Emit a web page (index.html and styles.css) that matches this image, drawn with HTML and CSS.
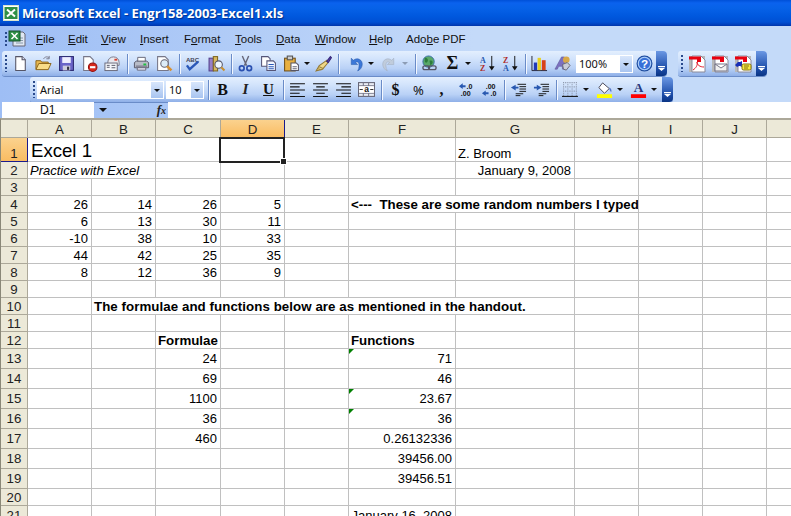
FILE: index.html
```html
<!DOCTYPE html>
<html lang="en">
<head>
    <meta charset="UTF-8">
    <title>Microsoft Excel - Engr158-2003-Excel1.xls</title>
    <link rel="stylesheet" href="styles.css">
</head>
<body>
<div class="window">

    <div class="titlebar">
        <svg class="app-icon" viewBox="0 0 16 16"><rect x="0.5" y="0.5" width="15" height="15" fill="#fff" stroke="#d8e4d0"/><rect x="1.5" y="2" width="13" height="12" fill="#2f8f46"/><path d="M4 4.5l8 7M12 4.5l-8 7" stroke="#fff" stroke-width="2"/></svg>
        <span class="title-text">Microsoft Excel - Engr158-2003-Excel1.xls</span>
    </div>

    <div class="bars">
        <div class="menubar">
            <span class="grip"></span>
            <svg class="doc-icon" viewBox="0 0 18 18"><path d="M5 2h10l2 2v12H5z" fill="#dfe7f2" stroke="#667"/><path d="M8 8h7M8 10.500h7M8 13h7" stroke="#89a"/><rect x="1" y="1" width="11" height="10" fill="#2f8f46" stroke="#15502a"/><path d="M3.500 3l6 6M9.500 3l-6 6" stroke="#fff" stroke-width="1.500"/></svg>
            <a class="menu m-file"><u>F</u>ile</a>
            <a class="menu m-edit"><u>E</u>dit</a>
            <a class="menu m-view"><u>V</u>iew</a>
            <a class="menu m-insert"><u>I</u>nsert</a>
            <a class="menu m-format">F<u>o</u>rmat</a>
            <a class="menu m-tools"><u>T</u>ools</a>
            <a class="menu m-data"><u>D</u>ata</a>
            <a class="menu m-window"><u>W</u>indow</a>
            <a class="menu m-help"><u>H</u>elp</a>
            <a class="menu">Ado<u>b</u>e PDF</a>
        </div>

        <div class="bar-row">
            <div class="toolbar tb-standard">
                <span class="grip"></span>
                <button class="btn"><svg viewBox="0 0 16 16"><path d="M3.500 1.500h6l3 3v10h-9z" fill="#fff" stroke="#556"/><path d="M9.500 1.500v3h3" fill="#dde" stroke="#556"/></svg></button>
                <button class="btn"><svg viewBox="0 0 18 16"><path d="M1 5h5l1 1.500h7V14H1z" fill="#e8b850" stroke="#8a6418"/><path d="M4 8h13l-3 6.500H1z" fill="#f8dc88" stroke="#8a6418"/><path d="M9 3c2-2.500 4-2.500 6-1M15 0v3h-3" fill="none" stroke="#778"/></svg></button>
                <button class="btn"><svg viewBox="0 0 16 16"><rect x="1.500" y="1.500" width="13" height="13" fill="#6a64c8" stroke="#2a2870"/><rect x="4" y="2" width="8" height="5.500" fill="#eef"/><rect x="4.500" y="10" width="7" height="4.500" fill="#ccd"/><rect x="8.500" y="11" width="2" height="3" fill="#334"/></svg></button>
                <button class="btn"><svg viewBox="0 0 16 16"><path d="M2.500 1.500h6l3 3v10h-9z" fill="#fff" stroke="#778"/><circle cx="11" cy="11.500" r="4" fill="#d8281c" stroke="#901010"/><rect x="8.500" y="10.500" width="5" height="2" fill="#fff"/></svg></button>
                <button class="btn"><svg viewBox="0 0 18 16"><path d="M4 7c0-4 3-6 6-6s6 2 6 6v3H4z" fill="#e8e8ee" stroke="#778"/><rect x="11" y="3" width="3" height="2" fill="#d84030"/><rect x="1" y="7.500" width="13" height="8" fill="#f4f6fa" stroke="#667"/><path d="M3 10h3M3 12h3M8 10h4M8 12.500h4" stroke="#556"/></svg></button>
                <span class="sep"></span>
                <button class="btn"><svg viewBox="0 0 18 16"><path d="M5 1.500h8v5H5z" fill="#fff" stroke="#667"/><path d="M1.500 7l2-1.500h11l2 1.500v5.500h-15z" fill="#b8bcc8" stroke="#556"/><rect x="3" y="10" width="12" height="2" fill="#889"/><rect x="11" y="8" width="3" height="2" fill="#20c040"/><path d="M4.500 12.500h9v2.500h-9z" fill="#eef" stroke="#667"/></svg></button>
                <button class="btn"><svg viewBox="0 0 16 16"><path d="M1.500 1.500h7l3 3v10h-10z" fill="#fff" stroke="#778"/><circle cx="8" cy="8" r="3.500" fill="#dcecf8" stroke="#667"/><path d="M10.500 10.500l4 4" stroke="#d89030" stroke-width="2.500"/></svg></button>
                <span class="sep"></span>
                <button class="btn"><svg viewBox="0 0 18 16"><text x="1" y="6.500" class="svg-abc">ABC</text><path d="M2 10l3 4 9-8" fill="none" stroke="#2a58b8" stroke-width="2.500"/></svg></button>
                <button class="btn"><svg viewBox="0 0 16 16"><rect x="1" y="3" width="4" height="12" fill="#9880c8" stroke="#54408c"/><rect x="5" y="1.500" width="4" height="13.500" fill="#d8b860" stroke="#806820"/><circle cx="10" cy="9" r="3.500" fill="#eef6ff" stroke="#556"/><path d="M12.500 11.500l3 3" stroke="#c89030" stroke-width="2"/></svg></button>
                <span class="sep"></span>
                <button class="btn"><svg viewBox="0 0 16 16"><path d="M5 1l4 9M11 1L7 10" stroke="#667" stroke-width="1.300"/><circle cx="4.500" cy="12.500" r="2.200" fill="none" stroke="#2a50b0" stroke-width="1.600"/><circle cx="11.500" cy="12.500" r="2.200" fill="none" stroke="#2a50b0" stroke-width="1.600"/></svg></button>
                <button class="btn"><svg viewBox="0 0 16 16"><path d="M1.500 1.500h6l2 2v7h-8z" fill="#fff" stroke="#557"/><path d="M6.500 5.500h6l2 2v7h-8z" fill="#f4f8ff" stroke="#557"/><path d="M8 9h5M8 11h5M8 13h5" stroke="#2a58b8"/></svg></button>
                <button class="btn"><svg viewBox="0 0 16 16"><rect x="1.500" y="3" width="10" height="12" fill="#e8b040" stroke="#70501a"/><rect x="4" y="1" width="5" height="3.500" fill="#ccc" stroke="#555"/><path d="M7.500 7.500h5l2 2v5h-7z" fill="#fff" stroke="#556"/><path d="M9 11h4M9 13h4" stroke="#667"/></svg></button>
                <button class="drop"></button>
                <button class="btn"><svg viewBox="0 0 16 16"><path d="M11 5l-7 5-3 5 6-1.500 5-6z" fill="#f0d888" stroke="#927834"/><path d="M4 11l4 2M3 13l3 1" stroke="#a08840"/><path d="M11 6l3.500-4.500 1 1L12.500 7z" fill="#5a48a8" stroke="#38287c"/></svg></button>
                <span class="sep"></span>
                <button class="btn undo"><svg viewBox="0 0 16 16"><path d="M4 3v6h6L8 7c3-1.500 4 1 3 6l-1 2c5-2 6-9 1.500-11C9 3 7 4 6 5z" fill="#3c78d8" stroke="#2858a8" stroke-width=".5"/></svg></button>
                <button class="drop"></button>
                <button class="btn redo"><svg viewBox="0 0 16 16"><path d="M12 3v6H6l2-2c-3-1.500-4 1-3 6l1 2C1 13 0 6 4.500 4 7 3 9 4 10 5z" fill="#c0ccdc" stroke="#a0acbc" stroke-width=".5"/></svg></button>
                <button class="drop off"></button>
                <span class="sep sep-link"></span>
                <button class="btn"><svg viewBox="0 0 18 18"><circle cx="8" cy="7" r="6" fill="#58a868" stroke="#3c6ca8"/><path d="M4 3c3 0 4 2 3 4S4 8 4 6zM9 6c3-1 4 1 3 3l-2 2z" fill="#2c7c3c"/><rect x="2" y="11.500" width="7" height="4" rx="2" fill="none" stroke="#556" stroke-width="1.400"/><rect x="8" y="11.500" width="8" height="4" rx="2" fill="none" stroke="#556" stroke-width="1.400"/></svg></button>
                <button class="btn glyph sigma">Σ</button>
                <button class="drop"></button>
                <button class="btn sort-az"><svg viewBox="0 0 18 18"><text x="1" y="8" class="svg-sort s-blue">A</text><text x="1" y="17" class="svg-sort s-red">Z</text><path d="M13.500 1v13" stroke="#111"/><path d="M10.500 12h6l-3 4.500z" fill="#111"/></svg></button>
                <button class="btn"><svg viewBox="0 0 18 18"><text x="1" y="8" class="svg-sort s-red">Z</text><text x="1" y="17" class="svg-sort s-blue">A</text><path d="M13.500 1v13" stroke="#111"/><path d="M10.500 12h6l-3 4.500z" fill="#111"/></svg></button>
                <span class="sep"></span>
                <button class="btn"><svg viewBox="0 0 18 18"><path d="M1 1v15.500h16" fill="none" stroke="#223"/><rect x="3" y="8" width="3.500" height="8" fill="#2038b8"/><rect x="7" y="3" width="3.500" height="13" fill="#e8d020"/><rect x="11.500" y="5.500" width="4" height="10.500" fill="#d84018"/></svg></button>
                <button class="btn"><svg viewBox="0 0 18 18"><path d="M1 15L8 2h3l1 13H9l-.3-3H5l-1.500 3z" fill="#7c70c0" stroke="#50488c" stroke-width=".5"/><circle cx="13" cy="5" r="3.500" fill="#d8a848"/><path d="M9 10l5-2 3 3-4 5-3-1z" fill="#c8ccd8" stroke="#667"/></svg></button>
                <div class="combo zoom-box">
                    <span class="combo-text">100%</span>
                    <span class="combo-arrow"></span>
                </div>
                <button class="btn"><svg viewBox="0 0 16 16"><circle cx="8" cy="8" r="7" fill="#3c78d8" stroke="#1c4898"/><circle cx="8" cy="8" r="5.800" fill="#3870d8" stroke="#b0d0f8"/><text x="8" y="12" class="svg-help">?</text></svg></button>
                <span class="chevron"></span>
            </div>

            <div class="toolbar tb-pdf">
                <span class="grip"></span>
                <button class="btn pdf"><svg viewBox="0 0 18 18"><rect x="1" y="1" width="16" height="16" fill="#b8b8b8"/><path d="M4 1h9l4 4v12H4z" fill="#fff" stroke="#889"/><path d="M1 1.500h12v3H1zM9 3h4v4H9z" fill="#e80010"/><path d="M5 15c3-2 5-5 4-8 0 3 3 5 7 5" fill="none" stroke="#e02030"/></svg></button>
                <button class="btn pdf"><svg viewBox="0 0 18 18"><rect x="1" y="1" width="16" height="16" fill="#b8b8b8"/><path d="M4 1h9l4 4v12H4z" fill="#fff" stroke="#889"/><path d="M1 1.500h12v3H1zM9 3h4v4H9z" fill="#e80010"/><path d="M4 9h12v7H4zM4 9l6 4 6-4" fill="#f0f0f0" stroke="#778"/></svg></button>
                <button class="btn pdf"><svg viewBox="0 0 18 18"><rect x="1" y="1" width="16" height="16" fill="#b8b8b8"/><path d="M4 1h9l4 4v12H4z" fill="#fff" stroke="#889"/><path d="M1 1.500h12v3H1zM9 3h4v4H9z" fill="#e80010"/><path d="M1 10l3-3h2l2-1v6l-2-1H5l-2 1z" fill="#1830b8"/><rect x="8" y="9" width="9" height="6" rx="1.500" fill="#f8e840" stroke="#807010"/><path d="M10 11h5M10 13h4" stroke="#807010"/></svg></button>
                <span class="chevron"></span>
            </div>
        </div>

        <div class="toolbar tb-format">
            <span class="grip"></span>
            <div class="combo font-box">
                <span class="combo-text">Arial</span>
                <span class="combo-arrow"></span>
            </div>
            <div class="combo size-box">
                <span class="combo-text">10</span>
                <span class="combo-arrow"></span>
            </div>
            <span class="sep sep-first"></span>
            <button class="btn glyph fmt-b">B</button>
            <button class="btn glyph fmt-i">I</button>
            <button class="btn glyph fmt-u">U</button>
            <span class="sep"></span>
            <button class="btn"><svg viewBox="0 0 16 16"><path d="M1 2.500h14M1 5.500h9M1 8.500h14M1 11.500h9M1 14.500h14" stroke="#111"/></svg></button>
            <button class="btn"><svg viewBox="0 0 16 16"><path d="M1 2.500h14M4 5.500h8M1 8.500h14M4 11.500h8M1 14.500h14" stroke="#111"/></svg></button>
            <button class="btn"><svg viewBox="0 0 16 16"><path d="M1 2.500h14M6 5.500h9M1 8.500h14M6 11.500h9M1 14.500h14" stroke="#111"/></svg></button>
            <button class="btn"><svg viewBox="0 0 16 16"><rect x=".5" y="1.500" width="15" height="13" fill="#e8ecf4" stroke="#667"/><path d="M1 4.500h14M1 11.500h14M5 1.500v3M10 1.500v3M5 11.500v3M10 11.500v3" stroke="#778"/><rect x="1" y="5" width="14" height="6" fill="#fff"/><text x="8" y="10.500" class="svg-merge">a</text><path d="M1.500 8h3M11.500 8h3" stroke="#333"/></svg></button>
            <span class="sep"></span>
            <button class="btn glyph fmt-num">$</button>
            <button class="btn glyph fmt-pct">%</button>
            <button class="btn glyph fmt-num">,</button>
            <button class="btn dec-inc"><svg viewBox="0 0 18 16"><path d="M1 4.500L5 1.500v2h3v2H5v2z" fill="#2858b0"/><text x="9" y="7" class="svg-dec">.0</text><text x="3" y="15" class="svg-dec">.00</text></svg></button>
            <button class="btn"><svg viewBox="0 0 18 16"><text x="5" y="7" class="svg-dec">.00</text><path d="M8 12L4 9v2H1v2h3v2z" fill="#2858b0" transform="matrix(-1 0 0 1 9 0)"/><text x="10" y="15" class="svg-dec">.0</text></svg></button>
            <span class="sep"></span>
            <button class="btn"><svg viewBox="0 0 18 16"><path d="M8 2.500h9M10 5h7M10 7.500h7M10 10h7M6 12.500h8M6 14.500h5" stroke="#111"/><path d="M1 6l5-3v2h3v2H6v2z" fill="#2858b0"/></svg></button>
            <button class="btn"><svg viewBox="0 0 18 16"><path d="M8 2.500h9M10 5h7M10 7.500h7M10 10h7M6 12.500h8M6 14.500h5" stroke="#111"/><path d="M9 6L4 3v2H1v2h3v2z" fill="#2858b0"/></svg></button>
            <span class="sep"></span>
            <button class="btn"><svg viewBox="0 0 16 16"><path d="M1.500 1v13M5.500 1v13M9.500 1v13M13.500 1v13M1 1.500h13M1 5.500h13M1 9.500h13" stroke="#8a94a8" stroke-dasharray="1 1"/><path d="M0 14.500h15" stroke="#111"/></svg></button>
            <button class="drop"></button>
            <button class="btn"><svg viewBox="0 0 18 18"><path d="M7 2l7 6-5 5-6-6z" fill="#fff" stroke="#445"/><path d="M14 7c2 1 3 3 2 5-1-1-2-3-2-5z" fill="#5878c8"/><rect x="1" y="14" width="16" height="4" fill="#ffff00"/></svg></button>
            <button class="drop"></button>
            <button class="btn"><svg viewBox="0 0 18 18"><text x="9" y="12" class="svg-fontcolor">A</text><rect x="1" y="14" width="16" height="4" fill="#ff0000"/></svg></button>
            <button class="drop"></button>
            <span class="chevron"></span>
        </div>

        <div class="formula-bar">
            <div class="name-box">D1</div>
            <span class="name-arrow"></span>
            <span class="fx"><i>f</i><i class="fx-x">x</i></span>
            <div class="formula-input"></div>
        </div>
    </div>

    <div class="sheet">
        <table class="grid">
            <colgroup>
                <col class="c-head"><col class="c-64"><col class="c-64"><col class="c-65"><col class="c-64"><col class="c-64"><col class="c-f"><col class="c-g"><col class="c-64"><col class="c-64"><col class="c-64"><col class="c-k">
            </colgroup>
            <tr class="head-row"><th></th><th>A</th><th>B</th><th>C</th><th class="cur">D</th><th>E</th><th>F</th><th>G</th><th>H</th><th>I</th><th>J</th><th></th></tr>
            <tr class="r-title"><th class="cur">1</th><td colspan="2" class="big">Excel 1</td><td></td><td class="selected"><span class="sel-box"></span></td><td></td><td></td><td>Z. Broom</td><td></td><td></td><td></td><td></td></tr>
            <tr><th>2</th><td colspan="2" class="ital">Practice with Excel</td><td></td><td></td><td></td><td></td><td class="num">January 9, 2008</td><td></td><td></td><td></td><td></td></tr>
            <tr><th>3</th><td></td><td></td><td></td><td></td><td></td><td></td><td></td><td></td><td></td><td></td><td></td></tr>
            <tr><th>4</th><td class="num">26</td><td class="num">14</td><td class="num">26</td><td class="num">5</td><td></td><td colspan="3" class="bold">&lt;---&nbsp; These are some random numbers I typed</td><td></td><td></td><td></td></tr>
            <tr><th>5</th><td class="num">6</td><td class="num">13</td><td class="num">30</td><td class="num">11</td><td></td><td></td><td></td><td></td><td></td><td></td><td></td></tr>
            <tr><th>6</th><td class="num">-10</td><td class="num">38</td><td class="num">10</td><td class="num">33</td><td></td><td></td><td></td><td></td><td></td><td></td><td></td></tr>
            <tr><th>7</th><td class="num">44</td><td class="num">42</td><td class="num">25</td><td class="num">35</td><td></td><td></td><td></td><td></td><td></td><td></td><td></td></tr>
            <tr><th>8</th><td class="num">8</td><td class="num">12</td><td class="num">36</td><td class="num">9</td><td></td><td></td><td></td><td></td><td></td><td></td><td></td></tr>
            <tr><th>9</th><td></td><td></td><td></td><td></td><td></td><td></td><td></td><td></td><td></td><td></td><td></td></tr>
            <tr><th>10</th><td></td><td colspan="6" class="bold long">The formulae and functions below are as mentioned in the handout.</td><td></td><td></td><td></td><td></td></tr>
            <tr><th>11</th><td></td><td></td><td></td><td></td><td></td><td></td><td></td><td></td><td></td><td></td><td></td></tr>
            <tr><th>12</th><td></td><td></td><td class="bold">Formulae</td><td></td><td></td><td class="bold">Functions</td><td></td><td></td><td></td><td></td><td></td></tr>
            <tr class="tall"><th>13</th><td></td><td></td><td class="num">24</td><td></td><td></td><td class="num flag">71</td><td></td><td></td><td></td><td></td><td></td></tr>
            <tr class="tall"><th>14</th><td></td><td></td><td class="num">69</td><td></td><td></td><td class="num">46</td><td></td><td></td><td></td><td></td><td></td></tr>
            <tr class="tall"><th>15</th><td></td><td></td><td class="num">1100</td><td></td><td></td><td class="num flag">23.67</td><td></td><td></td><td></td><td></td><td></td></tr>
            <tr class="tall"><th>16</th><td></td><td></td><td class="num">36</td><td></td><td></td><td class="num flag">36</td><td></td><td></td><td></td><td></td><td></td></tr>
            <tr class="tall"><th>17</th><td></td><td></td><td class="num">460</td><td></td><td></td><td class="num">0.26132336</td><td></td><td></td><td></td><td></td><td></td></tr>
            <tr class="tall"><th>18</th><td></td><td></td><td></td><td></td><td></td><td class="num">39456.00</td><td></td><td></td><td></td><td></td><td></td></tr>
            <tr class="tall"><th>19</th><td></td><td></td><td></td><td></td><td></td><td class="num">39456.51</td><td></td><td></td><td></td><td></td><td></td></tr>
            <tr><th>20</th><td></td><td></td><td></td><td></td><td></td><td></td><td></td><td></td><td></td><td></td><td></td></tr>
            <tr class="tall"><th>21</th><td></td><td></td><td></td><td></td><td></td><td class="num">January 16, 2008</td><td></td><td></td><td></td><td></td><td></td></tr>
        </table>
    </div>

</div>
</body>
</html>
```

FILE: styles.css
```css
* {
    box-sizing: border-box;
}

html, body {
    margin: 0;
    padding: 0;
    height: 516px;
    overflow: hidden;
}

body {
    font-family: "Liberation Sans", Arial, sans-serif;
    background: #fff;
}

.window {
    width: 791px;
    height: 516px;
    overflow: hidden;
}

/* Title bar */
.titlebar {
    height: 26px;
    display: flex;
    align-items: center;
    padding: 0 0 1px 3px;
    background: linear-gradient(to bottom, #0050d8 0, #0a62ee 3px, #0762e8 8px, #0058de 16px, #0050d4 22px, #003cb8 25px, #0034a8 26px);
}

.app-icon {
    width: 16px;
    height: 16px;
    flex: none;
}

.title-text {
    margin-left: 3px;
    color: #fff;
    font-family: "Open Sans", sans-serif;
    font-size: 13px;
    font-weight: 700;
    white-space: nowrap;
    text-shadow: 1px 1px 1px #003090;
}

/* Bars area */
.bars {
    height: 92px;
    background: linear-gradient(to right, #9ebef5, #c4daf9 60%, #c4daf9);
}

.menubar {
    height: 25px;
    display: flex;
    align-items: center;
    padding-left: 5px;
    font-size: 11.5px;
    color: #111;
}

.menubar .grip {
    height: 14px;
}

.doc-icon {
    width: 18px;
    height: 18px;
    margin-left: 1px;
    margin-right: 10px;
    flex: none;
}

.menu {
    flex: none;
    white-space: nowrap;
}

.m-file { width: 32px; }
.m-edit { width: 33px; }
.m-view { width: 39px; }
.m-insert { width: 44px; }
.m-format { width: 51px; }
.m-tools { width: 41px; }
.m-data { width: 39px; }
.m-window { width: 54px; }
.m-help { width: 37px; }

.grip {
    width: 2px;
    height: 17px;
    flex: none;
    background: repeating-linear-gradient(to bottom, #2a4a8c 0, #2a4a8c 2px, transparent 2px, transparent 4px);
}

.bar-row {
    display: flex;
    height: 26px;
    padding-left: 2px;
}

.toolbar {
    height: 25px;
    display: flex;
    align-items: center;
    padding-left: 3px;
    border-radius: 3px 4px 4px 3px;
    background: linear-gradient(to bottom, #e3effe 0, #d3e4fc 30%, #b9d1f6 70%, #8fb0e8 100%);
    box-shadow: 0 1px 0 #6a8cc8;
}

.tb-standard {
    width: 665px;
}

.tb-pdf {
    width: 89px;
    margin-left: 11px;
}

.tb-format {
    width: 643px;
    margin-left: 30px;
}

.toolbar .grip {
    margin-right: 2px;
}

.btn {
    width: 23px;
    height: 23px;
    flex: none;
    padding: 0;
    margin: 0;
    border: 0;
    background: none;
    display: flex;
    align-items: center;
    justify-content: center;
    color: #111;
}

.btn svg {
    width: 17px;
    height: 17px;
}

.drop {
    width: 9px;
    height: 23px;
    flex: none;
    padding: 0;
    border: 0;
    background: none;
    position: relative;
}

.tb-format .drop {
    width: 11px;
}

.drop::after {
    content: "";
    position: absolute;
    left: 1px;
    top: 10px;
    border: 3px solid transparent;
    border-top: 3px solid #111;
    border-bottom: 0;
    border-left-width: 3px;
}

.drop.off::after {
    border-top-color: #8c9cb4;
}

.sep {
    width: 1px;
    height: 20px;
    flex: none;
    margin: 0 2px 0 3px;
    background: #6a8cc8;
    box-shadow: 1px 0 0 #f4f8ff;
}

.sep-first {
    margin-left: 4px;
}

.sep-link {
    margin-left: 5px;
}

.undo {
    margin-left: 3px;
}

.redo {
    margin-left: 2px;
}

.sort-az {
    margin-left: 3px;
}

.dec-inc {
    margin-left: 2px;
}

.glyph {
    font-family: "Liberation Serif", serif;
    font-size: 15px;
}

.sigma {
    font-size: 18px;
    font-weight: 700;
}

.fmt-b {
    font-weight: 700;
    font-size: 16px;
}

.fmt-i {
    font-style: italic;
    font-weight: 700;
    color: #222;
}

.fmt-u {
    font-weight: 700;
    text-decoration: underline;
}

.fmt-num {
    font-weight: 700;
    font-size: 16px;
}

.fmt-pct {
    font-family: "Noto Sans", sans-serif;
    font-size: 13px;
}

.svg-abc {
    font: 700 6.5px "Liberation Sans", sans-serif;
    fill: #445;
}

.svg-sort {
    font: 700 8.5px "Liberation Serif", serif;
}

.s-blue { fill: #2858b0; }
.s-red { fill: #b02c28; }

.svg-help {
    font: 700 11px "Liberation Sans", sans-serif;
    fill: #fff;
    text-anchor: middle;
}

.svg-merge {
    font: 700 8px "Liberation Sans", sans-serif;
    fill: #111;
    text-anchor: middle;
}

.svg-dec {
    font: 700 7.5px "Liberation Sans", sans-serif;
    fill: #111;
}

.svg-fontcolor {
    font: 700 14px "Liberation Serif", serif;
    fill: #28387c;
    text-anchor: middle;
}

.combo {
    height: 18px;
    flex: none;
    display: flex;
    align-items: center;
    background: #fff;
    font-family: "Noto Sans", sans-serif;
    font-size: 11px;
    color: #111;
}

.combo-text {
    flex: 1;
    padding-left: 3px;
}

.combo-arrow {
    width: 12px;
    height: 16px;
    margin-right: 1px;
    background: linear-gradient(to bottom, #d8e6fb, #a8c4f0);
    position: relative;
}

.combo-arrow::after {
    content: "";
    position: absolute;
    left: 3px;
    top: 7px;
    border: 3px solid transparent;
    border-top-color: #111;
    border-bottom: 0;
}

.zoom-box {
    width: 57px;
    margin-left: 2px;
}

.font-box {
    width: 127px;
}

.size-box {
    width: 38px;
    margin-left: 2px;
}

.pdf svg {
    width: 18px;
    height: 18px;
}

.chevron {
    width: 11px;
    height: 25px;
    flex: none;
    margin-left: auto;
    border-radius: 0 4px 4px 0;
    background: linear-gradient(to bottom, #6b98e4, #1c4ca8 70%, #0a3484);
    position: relative;
}

.chevron::after {
    content: "";
    position: absolute;
    left: 2px;
    bottom: 5px;
    width: 7px;
    height: 5px;
    background: #fff;
    clip-path: polygon(0 0, 100% 0, 100% 25%, 0 25%, 0 40%, 100% 40%, 50% 100%, 0 40%);
}

/* Formula bar */
.formula-bar {
    height: 16px;
    display: flex;
    align-items: center;
}

.name-box {
    width: 92px;
    height: 16px;
    margin-left: 2px;
    padding-left: 38px;
    background: #fff;
    font-size: 12px;
    line-height: 16px;
    color: #111;
}

.name-arrow {
    width: 0;
    height: 0;
    margin-left: 5px;
    border: 4px solid transparent;
    border-top-color: #111;
    border-bottom: 0;
}

.fx {
    width: 61px;
    padding-right: 2px;
    text-align: right;
    font-family: "Liberation Serif", serif;
    font-size: 13px;
    font-weight: 700;
    color: #222;
}

.fx-x {
    font-size: 10px;
}

.formula-input {
    flex: 1;
    height: 16px;
    background: #fff;
}

/* Sheet */
.sheet {
    border-top: 2px solid #aca899;
    border-left: 1px solid #8a8878;
    margin-top: 0;
    background: #fff;
}

.grid {
    width: 790px;
    table-layout: fixed;
    border-collapse: separate;
    border-spacing: 0;
    font-size: 13px;
    color: #000;
}

.c-head { width: 27px; }
.c-64 { width: 64px; }
.c-65 { width: 65px; }
.c-f { width: 107px; }
.c-g { width: 119px; }
.c-k { width: 25px; }

.grid tr {
    height: 17px;
}

.grid tr.head-row {
    height: 18px;
}

.grid tr.r-title {
    height: 24px;
}

.grid tr.tall {
    height: 20px;
}

.grid tr.tall th,
.grid tr.tall td {
    vertical-align: middle;
}

.grid th {
    padding: 0;
    font-weight: 400;
    font-size: 13.3px;
    line-height: 14px;
    text-align: center;
    background: #ece9d8;
    color: #222;
    border-right: 1px solid #aca899;
    border-bottom: 1px solid #aca899;
    vertical-align: bottom;
}

.grid th.cur {
    background: linear-gradient(to bottom, #fbd28e, #f9bc62);
    border-right-color: #1a1a8c;
    border-bottom-color: #1a1a8c;
}

.grid td {
    padding: 0 2px;
    line-height: 14px;
    white-space: nowrap;
    overflow: hidden;
    vertical-align: bottom;
    border-right: 1px solid #c0c0c0;
    border-bottom: 1px solid #c0c0c0;
}

.num {
    text-align: right;
    padding-right: 3px !important;
}

.grid td.bold {
    font-size: 13.3px;
    font-weight: 700;
}

.long {
    letter-spacing: 0.06px;
}

.ital {
    font-style: italic;
}

.big {
    font-size: 18.6px;
    padding-left: 3px !important;
}

.r-title td.big {
    line-height: 20px;
}

.selected {
    position: relative;
    overflow: visible !important;
}

.sel-box {
    position: absolute;
    left: -2px;
    top: -1px;
    width: 66px;
    height: 26px;
    border: 2px solid #222;
}

.sel-box::after {
    content: "";
    position: absolute;
    right: -4px;
    bottom: -4px;
    width: 5px;
    height: 5px;
    background: #222;
    border: 1px solid #fff;
}

.flag {
    position: relative;
}

.flag::before {
    content: "";
    position: absolute;
    left: 0;
    top: 0;
    border-top: 5px solid #008000;
    border-right: 5px solid transparent;
}
```
